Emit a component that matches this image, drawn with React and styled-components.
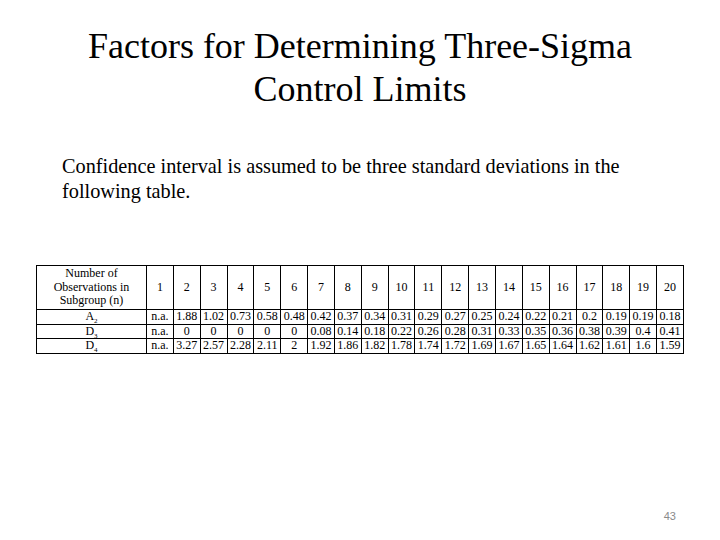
import React from 'react';
import styled, { createGlobalStyle } from 'styled-components';

const Global = createGlobalStyle`
  html, body {
    margin: 0;
    padding: 0;
    background: #ffffff;
  }
`;

const Slide = styled.div`
  width: 720px;
  height: 540px;
  position: relative;
  overflow: hidden;
  display: flex;
  flex-direction: column;
  font-family: "Liberation Serif", "Times New Roman", Times, "DejaVu Serif", serif;
  color: #000;
`;

const Title = styled.h1`
  margin: 25px 0 0;
  font-weight: 400;
  font-size: 36px;
  line-height: 43px;
  text-align: center;
`;

const Lead = styled.p`
  margin: 43px 0 0 62px;
  width: 600px;
  font-size: 20.3px;
  line-height: 25px;
`;

const Table = styled.table`
  margin: 61px 0 0 36px;
  border-collapse: collapse;
  width: 648px;
  table-layout: fixed;
  font-family: inherit;
  font-size: 12px;
  line-height: 13.5px;

  & td {
    border: 1px solid #000;
    text-align: center;
    padding: 0;
    white-space: nowrap;
  }
`;

const HeadRow = styled.tr`
  height: 44px;
`;

const DataRow = styled.tr`
  height: 14px;
`;

const Label = styled.td`
  width: 110px;
  box-sizing: border-box;
  && { white-space: normal; padding: 0 4px; }
`;

const PageNum = styled.div`
  position: absolute;
  right: 44px;
  bottom: 18px;
  font-family: "Liberation Sans", Arial, sans-serif;
  font-size: 11px;
  color: #8a8a8a;
`;

const ns = Array.from({ length: 20 }, (_, i) => i + 1);

const rows = [
  { sym: 'A', sub: '2', vals: ['n.a.', '1.88', '1.02', '0.73', '0.58', '0.48', '0.42', '0.37', '0.34', '0.31', '0.29', '0.27', '0.25', '0.24', '0.22', '0.21', '0.2', '0.19', '0.19', '0.18'] },
  { sym: 'D', sub: '3', vals: ['n.a.', '0', '0', '0', '0', '0', '0.08', '0.14', '0.18', '0.22', '0.26', '0.28', '0.31', '0.33', '0.35', '0.36', '0.38', '0.39', '0.4', '0.41'] },
  { sym: 'D', sub: '4', vals: ['n.a.', '3.27', '2.57', '2.28', '2.11', '2', '1.92', '1.86', '1.82', '1.78', '1.74', '1.72', '1.69', '1.67', '1.65', '1.64', '1.62', '1.61', '1.6', '1.59'] },
];

const Sub = styled.sub`
  font-size: 7px;
  line-height: 0;
`;

export default function App() {
  return (
    <Slide>
      <Global />
      <Title>
        Factors for Determining Three-Sigma
        <br />
        Control Limits
      </Title>
      <Lead>
        Confidence interval is assumed to be three standard deviations in the following table.
      </Lead>
      <Table>
        <tbody>
          <HeadRow>
            <Label>Number of Observations in Subgroup (n)</Label>
            {ns.map((n) => (
              <td key={n}>{n}</td>
            ))}
          </HeadRow>
          {rows.map((r) => (
            <DataRow key={r.sym + r.sub}>
              <td>
                {r.sym}
                <Sub>{r.sub}</Sub>
              </td>
              {r.vals.map((v, i) => (
                <td key={i}>{v}</td>
              ))}
            </DataRow>
          ))}
        </tbody>
      </Table>
      <PageNum>43</PageNum>
    </Slide>
  );
}
